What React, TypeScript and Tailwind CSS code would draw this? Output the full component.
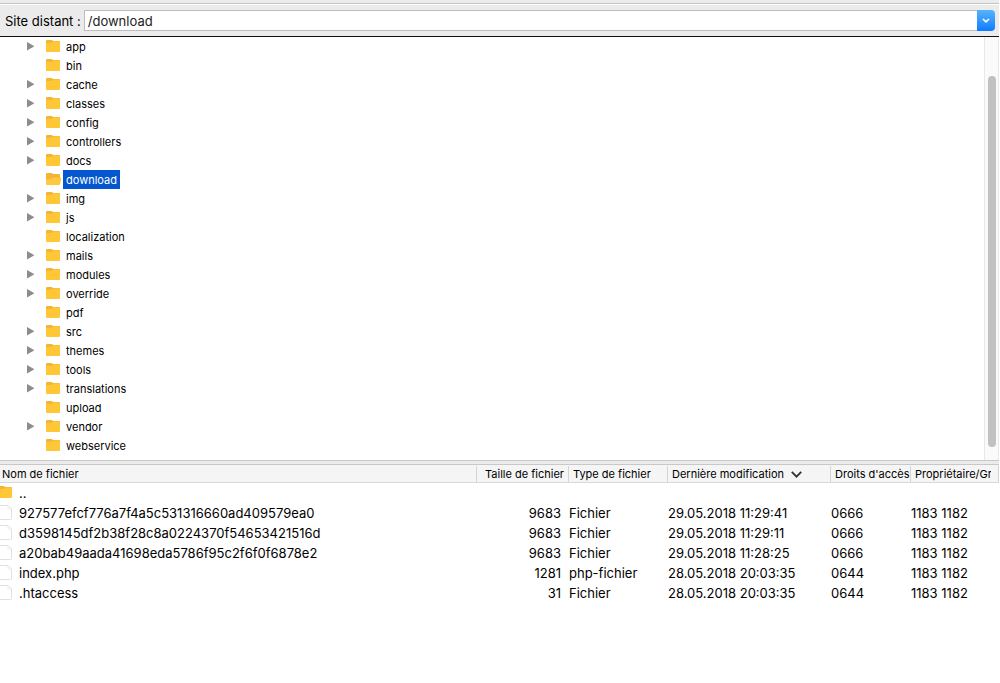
import { useState } from "react";

interface TreeNode {
  name: string;
  expandable: boolean;
}

interface RemoteFile {
  name: string;
  size: string;
  type: string;
  modified: string;
  rights: string;
  owner: string;
}

const folders: TreeNode[] = [
  { name: "app", expandable: true },
  { name: "bin", expandable: false },
  { name: "cache", expandable: true },
  { name: "classes", expandable: true },
  { name: "config", expandable: true },
  { name: "controllers", expandable: true },
  { name: "docs", expandable: true },
  { name: "download", expandable: false },
  { name: "img", expandable: true },
  { name: "js", expandable: true },
  { name: "localization", expandable: false },
  { name: "mails", expandable: true },
  { name: "modules", expandable: true },
  { name: "override", expandable: true },
  { name: "pdf", expandable: false },
  { name: "src", expandable: true },
  { name: "themes", expandable: true },
  { name: "tools", expandable: true },
  { name: "translations", expandable: true },
  { name: "upload", expandable: false },
  { name: "vendor", expandable: true },
  { name: "webservice", expandable: false },
];

const files: RemoteFile[] = [
  { name: "927577efcf776a7f4a5c531316660ad409579ea0", size: "9683", type: "Fichier", modified: "29.05.2018 11:29:41", rights: "0666", owner: "1183 1182" },
  { name: "d3598145df2b38f28c8a0224370f54653421516d", size: "9683", type: "Fichier", modified: "29.05.2018 11:29:11", rights: "0666", owner: "1183 1182" },
  { name: "a20bab49aada41698eda5786f95c2f6f0f6878e2", size: "9683", type: "Fichier", modified: "29.05.2018 11:28:25", rights: "0666", owner: "1183 1182" },
  { name: "index.php", size: "1281", type: "php-fichier", modified: "28.05.2018 20:03:35", rights: "0644", owner: "1183 1182" },
  { name: ".htaccess", size: "31", type: "Fichier", modified: "28.05.2018 20:03:35", rights: "0644", owner: "1183 1182" },
];

function FolderIcon({ open = false }: { open?: boolean }) {
  return (
    <svg viewBox="0 0 16 14" className="h-3.5 w-4 shrink-0" aria-hidden="true">
      <path d="M0 1Q0 0 1 0H5.5L7.5 1H13Q14 1 14 2V8H0Z" fill="#f4b436" />
      {open ? (
        <path d="M0 11V6.5L5 6L7 4.5H14.5Q15.4 4.5 15.2 5.5L14.2 11Q14 12 13 12H1Q0 12 0 11Z" fill="#ffc93c" />
      ) : (
        <path d="M0 3H5.5L7.5 1.6H13Q14 1.6 14 2.6V11Q14 12 13 12H1Q0 12 0 11Z" fill="#ffc636" />
      )}
    </svg>
  );
}

function FileIcon() {
  return (
    <svg viewBox="0 0 12 16" className="h-4 w-3 shrink-0" aria-hidden="true">
      <path d="M-2 0.5H8L11.5 4V13.5Q11.5 14.5 10.5 14.5H-2" fill="#fff" stroke="#e0e0e0" />
      <path d="M8 0.5V4H11.5" fill="none" stroke="#ececec" />
    </svg>
  );
}

function PathBar() {
  const [path, setPath] = useState("/download");

  return (
    <div className="flex h-8 items-center border-t border-white bg-[#ebebeb] pr-1 pl-[5px]">
      <label htmlFor="remote-path" className="mr-[3px] text-[13px] whitespace-pre">
        Site distant :
      </label>
      <div className="flex h-[21px] min-w-0 flex-1">
        <input
          id="remote-path"
          type="text"
          value={path}
          onChange={(e) => setPath(e.target.value)}
          className="min-w-0 flex-1 border border-r-0 border-[#bdbdbd] bg-white px-[3px] text-[13px] text-[#222] outline-none"
        />
        <button
          type="button"
          aria-label="Historique"
          className="flex w-[18px] items-center justify-center rounded-r bg-linear-to-b from-[#56b3fa] to-[#0a7bff]"
        >
          <svg viewBox="0 0 8 5" className="h-[5px] w-2" fill="none" stroke="#fff" strokeWidth="1.6">
            <path d="M1 1L4 3.8L7 1" />
          </svg>
        </button>
      </div>
    </div>
  );
}

function DirectoryTree() {
  const [selected, setSelected] = useState("download");

  return (
    <div className="flex border-t border-[#111] bg-white">
      <ul className="min-w-0 flex-1 pb-[5px] text-[11px]">
        {folders.map((folder) => (
          <li key={folder.name} className="flex h-[19px] items-center pl-[26px]">
            <span className="w-5">
              {folder.expandable && (
                <button type="button" aria-label={`Ouvrir ${folder.name}`} className="block">
                  <svg viewBox="0 0 8 9" className="h-[9px] w-2" fill="#8c8c8c">
                    <path d="M1 0L8.4 4.3L1 8.6Z" />
                  </svg>
                </button>
              )}
            </span>
            <FolderIcon open={folder.name === selected} />
            <button
              type="button"
              onClick={() => setSelected(folder.name)}
              className={
                folder.name === selected
                  ? "ml-px h-[19px] bg-[#0457cf] px-[3px] text-white"
                  : "ml-px h-[19px] px-[3px]"
              }
            >
              {folder.name}
            </button>
          </li>
        ))}
      </ul>
      <div className="w-[15px] border-x border-[#e8e8e8] bg-[#fafafa] pt-[39px] pr-0.5 pb-[13px] pl-[3px]">
        <div className="h-full rounded-full bg-[#c1c1c1]" />
      </div>
    </div>
  );
}

function FileTable() {
  return (
    <table className="w-full table-fixed border-separate border-spacing-0 text-left whitespace-nowrap">
      <colgroup>
        <col />
        <col className="w-[92px]" />
        <col className="w-[99px]" />
        <col className="w-[163px]" />
        <col className="w-20" />
        <col className="w-[88px]" />
      </colgroup>
      <thead className="bg-[#f5f5f5] text-[11px]">
        <tr className="leading-4 [&>th]:border-b [&>th]:border-[#d8d8d8] [&>th]:p-0 [&>th]:font-normal">
          <th>
            <div className="border-r border-[#d4d4d4] pl-0.5">Nom de fichier</div>
          </th>
          <th>
            <div className="border-r border-[#d4d4d4] pr-1 text-right">Taille de fichier</div>
          </th>
          <th>
            <div className="border-r border-[#d4d4d4] pl-1">Type de fichier</div>
          </th>
          <th aria-sort="descending">
            <div className="flex items-center gap-[7px] border-r border-[#d4d4d4] pl-1">
              Dernière modification
              <svg viewBox="0 0 11 7" className="h-[7px] w-[11px]" fill="none" stroke="#333" strokeWidth="1.9">
                <path d="M0.8 0.8L5.5 5.6L10.2 0.8" />
              </svg>
            </div>
          </th>
          <th>
            <div className="border-r border-[#d4d4d4] pl-1">Droits d'accès</div>
          </th>
          <th>
            <div className="border-r border-[#d4d4d4] pr-[7px] pl-1">
              <div className="overflow-hidden">Propriétaire/Groupe</div>
            </div>
          </th>
        </tr>
      </thead>
      <tbody className="text-[13px] [&_td]:p-0">
        <tr className="h-5">
          <td colSpan={6}>
            <div className="flex items-center">
              <span className="-ml-0.5 flex w-[21px]">
                <FolderIcon />
              </span>
              ..
            </div>
          </td>
        </tr>
        {files.map((file) => (
          <tr key={file.name} className="h-5">
            <td>
              <div className="flex items-center gap-[7px]">
                <FileIcon />
                {file.name}
              </div>
            </td>
            <td>
              <div className="pr-2 text-right">{file.size}</div>
            </td>
            <td>{file.type}</td>
            <td>{file.modified}</td>
            <td>{file.rights}</td>
            <td>{file.owner}</td>
          </tr>
        ))}
      </tbody>
    </table>
  );
}

export default function App() {
  return (
    <div className="min-h-screen bg-white pr-px font-['Inter',sans-serif] leading-5 text-black">
      <div className="h-1 border-b border-[#c4c4c4] bg-[#ebebeb]" />
      <PathBar />
      <DirectoryTree />
      <div className="h-[5px] border-y border-[#c8c8c8] bg-[#ebebeb]" />
      <div className="h-px bg-[#f5f5f5]" />
      <FileTable />
    </div>
  );
}
